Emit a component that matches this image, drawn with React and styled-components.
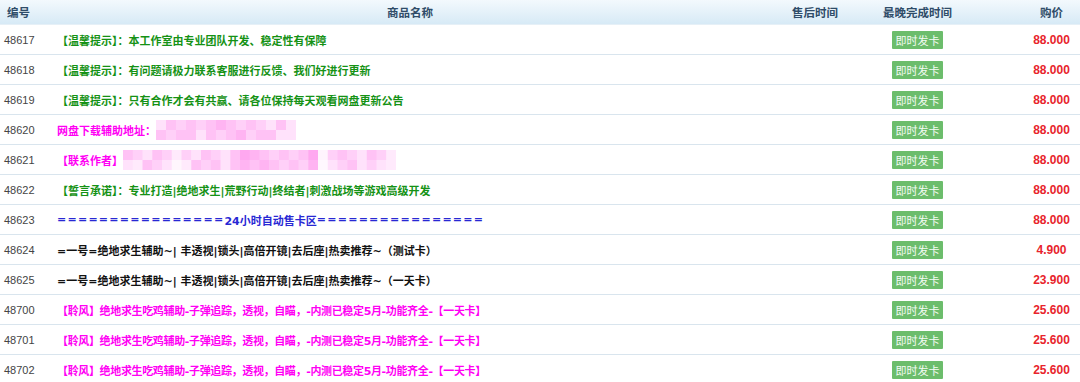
import React from "react";
import styled, { createGlobalStyle } from "styled-components";

const Global = createGlobalStyle`
  html, body { margin: 0; padding: 0; background: #fff; }
  body { font-family: "Liberation Sans", "Noto Sans CJK SC", sans-serif; }
`;

const Table = styled.div`
  width: 1080px;
  display: flex;
  flex-direction: column;
`;

const cols = "55px 710px 100px 105px 110px";

const HeadRow = styled.div`
  display: grid;
  grid-template-columns: ${cols};
  height: 25px;
  align-items: center;
  background: linear-gradient(#f3f9fd, #d7eaf6);
  border-bottom: 1px solid #e6f0f7;
  box-sizing: border-box;
`;

const HeadCell = styled.div`
  font-family: "Noto Sans CJK SC", sans-serif;
  font-weight: 700;
  font-size: 11.5px;
  color: #2f4c68;
  text-align: ${(p) => p.$align || "center"};
  padding-left: ${(p) => p.$pl || 0}px;
`;

const Row = styled.div`
  display: grid;
  grid-template-columns: ${cols};
  height: 30px;
  align-items: center;
  border-bottom: 1px solid #d9e5ee;
  box-sizing: border-box;
`;

const IdCell = styled.div`
  font-family: "Liberation Sans", sans-serif;
  font-size: 11px;
  color: #444;
  padding-left: 4px;
`;

const NameCell = styled.div`
  font-family: "DejaVu Sans", "Noto Sans CJK SC", sans-serif;
  font-weight: 700;
  font-size: 11px;
  color: ${(p) => p.$color};
  letter-spacing: ${(p) => p.$ls || 0}px;
  padding-left: 2px;
  white-space: nowrap;
  display: flex;
  align-items: center;
`;

const Eq = styled.span`
  letter-spacing: 1.25px;
`;

const Center = styled.div`
  display: flex;
  justify-content: center;
`;

const Badge = styled.span`
  display: inline-flex;
  align-items: center;
  justify-content: center;
  width: 51px;
  height: 18px;
  background: #6cbd6c;
  color: #f4fbf4;
  font-family: "Noto Sans CJK SC", sans-serif;
  font-size: 11px;
  border-radius: 1px;
`;

const Price = styled.div`
  font-family: "Liberation Sans", sans-serif;
  font-weight: 700;
  font-size: 12px;
  color: #e8242c;
  text-align: center;
  padding-left: 53px;
`;

const Mosaic = ({ cells, h = 20, w = 10 }) => (
  <svg width={cells.length * w} height={h} style={{ display: "block" }}>
    {cells.map((c, i) => (
      <g key={i}>
        <rect x={i * w} y={0} width={w + 0.5} height={h / 2} fill={c[0]} />
        <rect x={i * w} y={h / 2} width={w + 0.5} height={h / 2} fill={c[1]} />
      </g>
    ))}
  </svg>
);

const P1 = "#ffd0f8", P2 = "#ffc2f5", P3 = "#ffb4f2", P4 = "#ffe2fb", P5 = "#ffeafc", P6 = "#ffa8f0";

const mosaicA = [
  [P4, P2], [P2, P1], [P1, P2], [P2, P2], [P1, P4], [P2, P2], [P3, P1], [P2, P2],
  [P1, P3], [P2, P1], [P1, P2], [P4, P2], [P2, P4], [P4, P4],
];
const mosaicB = [
  [P2, P4], [P1, P5], [P4, P2], [P2, P1], [P1, P4], [P5, "#fff6fd"], [P1, P5], [P4, P2],
  [P2, P1], [P1, P2], [P4, P4], [P2, P2], [P6, P3], [P3, P2], [P2, P3], [P1, P2],
  [P2, P1], [P1, P2], [P2, P1], [P6, P3], ["#fff4fd", "#fff8fe"], [P1, P4], [P2, P1],
  [P1, P2], [P4, P4], [P2, P1], [P1, P4], [P5, P5],
];

const GREEN = "#159215";
const PINK = "#ff00f4";
const BLUE = "#2828d4";
const BLACK = "#111";

const eqs = "================";

const rows = [
  { id: "48617", color: GREEN, name: "【温馨提示】：本工作室由专业团队开发、稳定性有保障", price: "88.000" },
  { id: "48618", color: GREEN, name: "【温馨提示】：有问题请极力联系客服进行反馈、我们好进行更新", price: "88.000" },
  { id: "48619", color: GREEN, name: "【温馨提示】：只有合作才会有共赢、请各位保持每天观看网盘更新公告", price: "88.000" },
  { id: "48620", color: PINK, name: "网盘下载辅助地址：", mosaic: "a", price: "88.000" },
  { id: "48621", color: PINK, name: "【联系作者】", mosaic: "b", price: "88.000" },
  { id: "48622", color: GREEN, name: "【誓言承诺】：专业打造|绝地求生|荒野行动|终结者|刺激战场等游戏高级开发", price: "88.000" },
  { id: "48623", color: BLUE, eq: true, price: "88.000" },
  { id: "48624", color: BLACK, name: "=一号=绝地求生辅助~| 丰透视|锁头|高倍开镜|去后座|热卖推荐~（测试卡）", price: "4.900" },
  { id: "48625", color: BLACK, name: "=一号=绝地求生辅助~| 丰透视|锁头|高倍开镜|去后座|热卖推荐~（一天卡）", price: "23.900" },
  { id: "48700", color: PINK, ls: -0.35, name: "【聆风】绝地求生吃鸡辅助-子弹追踪，透视，自瞄，-内测已稳定5月-功能齐全-【一天卡】", price: "25.600" },
  { id: "48701", color: PINK, ls: -0.35, name: "【聆风】绝地求生吃鸡辅助-子弹追踪，透视，自瞄，-内测已稳定5月-功能齐全-【一天卡】", price: "25.600" },
  { id: "48702", color: PINK, ls: -0.35, name: "【聆风】绝地求生吃鸡辅助-子弹追踪，透视，自瞄，-内测已稳定5月-功能齐全-【一天卡】", price: "25.600" },
];

export default function App() {
  return (
    <>
      <Global />
      <Table>
        <HeadRow>
          <HeadCell $align="left" $pl={7}>编号</HeadCell>
          <HeadCell>商品名称</HeadCell>
          <HeadCell>售后时间</HeadCell>
          <HeadCell>最晚完成时间</HeadCell>
          <HeadCell $pl={53}>购价</HeadCell>
        </HeadRow>
        {rows.map((r) => (
          <Row key={r.id}>
            <IdCell>{r.id}</IdCell>
            <NameCell $color={r.color} $ls={r.ls}>
              {r.eq ? (
                <>
                  <Eq>{eqs}</Eq>24小时自动售卡区<Eq>{eqs}</Eq>
                </>
              ) : (
                r.name
              )}
              {r.mosaic === "a" && <Mosaic cells={mosaicA} w={10} h={20} />}
              {r.mosaic === "b" && <Mosaic cells={mosaicB} w={9.75} h={20} />}
            </NameCell>
            <div />
            <Center>
              <Badge>即时发卡</Badge>
            </Center>
            <Price>{r.price}</Price>
          </Row>
        ))}
      </Table>
    </>
  );
}
